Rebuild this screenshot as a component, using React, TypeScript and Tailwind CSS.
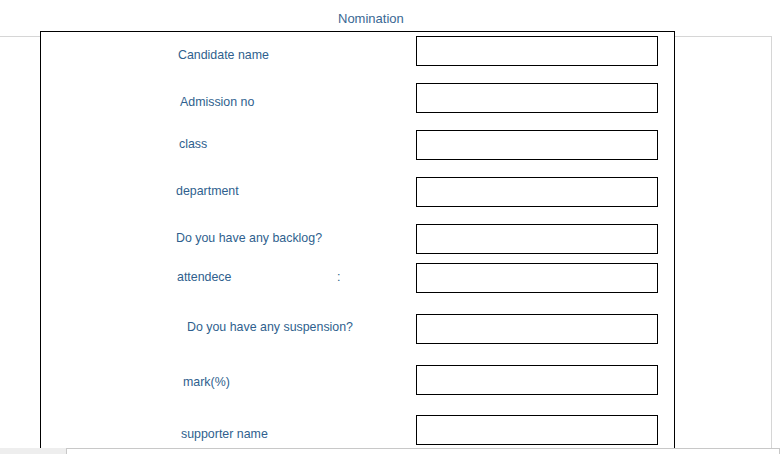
const rows = [
  { label: "Candidate name", left: 137, top: 12, gap: 4 },
  { label: "Admission no", left: 139, top: 12, gap: 17 },
  { label: "class", left: 138, top: 7, gap: 17 },
  { label: "department", left: 135, top: 7, gap: 17 },
  { label: "Do you have any backlog?", left: 135, top: 7, gap: 17 },
  { label: "attendece", left: 136, top: 7, gap: 9, colon: true },
  { label: "Do you have any suspension?", left: 146, top: 6, gap: 21 },
  { label: "mark(%)", left: 142, top: 10, gap: 21 },
  { label: "supporter name", left: 140, top: 12, gap: 20 },
];

export default function App() {
  return (
    <div className="w-[782px] h-[454px] overflow-hidden bg-white font-['Liberation_Sans',Arial,sans-serif] text-[#2f5f8e]">
      <div className="h-[448px] overflow-hidden">
        {/* title */}
        <div className="h-[36px] pt-[11px] pl-[338px] text-[13px] leading-[15px] text-[#3a6893]">
          Nomination
        </div>

        {/* gray panel */}
        <div className="w-[772px] h-[412px] border-t border-r border-[#d6d6d6]">
          <div className="-mt-[6px] ml-[40px] w-[635px] h-[430px] border border-black bg-white">
            {rows.map((r) => (
              <div
                key={r.label}
                className="flex h-[30px]"
                style={{ marginTop: r.gap }}
              >
                <div className="w-[375px] relative text-[12.4px] leading-[14px] whitespace-nowrap">
                  <span
                    className="absolute"
                    style={{ left: r.left, top: r.top }}
                  >
                    {r.label}
                  </span>
                  {r.colon && (
                    <span className="absolute left-[296px]" style={{ top: r.top }}>
                      :
                    </span>
                  )}
                </div>
                <input
                  type="text"
                  className="w-[242px] h-[30px] border border-black bg-white outline-none"
                />
              </div>
            ))}
          </div>
        </div>
      </div>

      {/* bottom strip */}
      <div className="flex h-[6px]">
        <div className="w-[66px] bg-[#eeeeee]" />
        <div className="w-[714px] border-t border-l border-r border-[#c8c8c8] bg-white" />
      </div>
    </div>
  );
}
